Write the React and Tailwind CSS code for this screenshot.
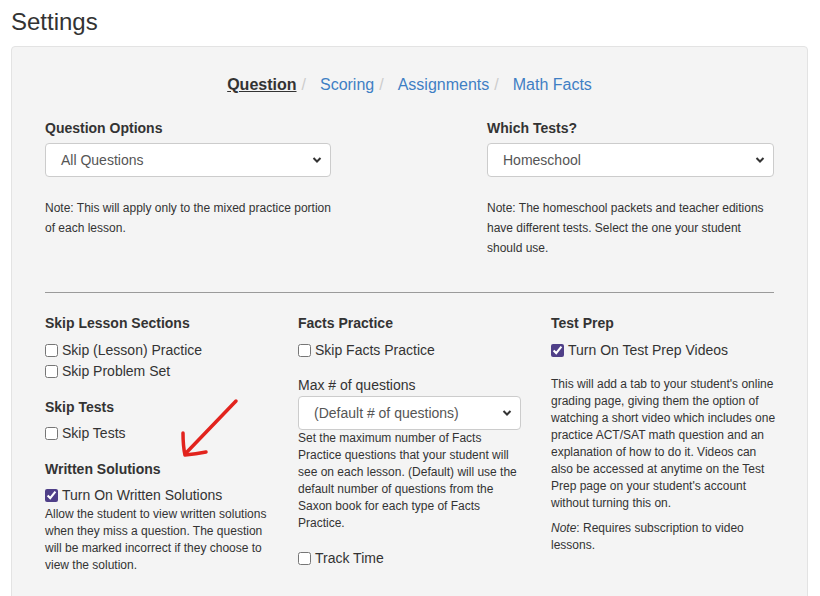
import React from "react";

const font = { fontFamily: '"Liberation Sans", Arial, sans-serif' };

function Chevron() {
  return (
    <svg className="absolute right-[8px] top-1/2 -translate-y-1/2" width="10" height="8" viewBox="0 0 10 8">
      <path d="M1.5 2 L5 5.5 L8.5 2" fill="none" stroke="#333" strokeWidth="2" />
    </svg>
  );
}

function Select({ value, className }) {
  return (
    <div className={"relative h-[34px] bg-white border border-[#cccccc] rounded-[4px] " + className}>
      <div className="absolute left-[15px] top-0 h-full flex items-center text-[14px] text-[#555555]">{value}</div>
      <Chevron />
    </div>
  );
}

function Check({ label, checked }) {
  return (
    <label className="flex items-center h-[20px] text-[14px] leading-[20px] text-[#333333]">
      <input
        type="checkbox"
        defaultChecked={checked}
        className="w-[13px] h-[13px] m-0 mr-[4px] accent-[#4f3f88]"
      />
      <span>{label}</span>
    </label>
  );
}

function H({ children, className = "" }) {
  return <div className={"text-[14px] leading-[20px] font-bold text-[#333333] " + className}>{children}</div>;
}

export default function App() {
  return (
    <div className="relative w-[820px] h-[596px] overflow-hidden bg-white px-[11px]" style={font}>
      <h1 className="pt-[9px] text-[24px] leading-[26px] text-[#333333]">Settings</h1>
      <div className="mt-[11px] w-[797px] h-[600px] border border-[#e3e3e3] rounded-[4px] bg-[#f4f4f4] px-[33px]">
        <div className="pt-[28px] flex justify-center text-[16px] leading-[20px]">
          <span className="font-bold underline text-[#333333]">Question</span>
          <span className="ml-[5px] mr-[14px] text-[#cccccc]">/</span>
          <span className="text-[#3f7fc4]">Scoring</span>
          <span className="ml-[5px] mr-[14px] text-[#cccccc]">/</span>
          <span className="text-[#3f7fc4]">Assignments</span>
          <span className="ml-[5px] mr-[14px] text-[#cccccc]">/</span>
          <span className="text-[#3f7fc4]">Math Facts</span>
        </div>

        <div className="mt-[23px] flex justify-between">
          <div className="w-[286px]">
            <H>Question Options</H>
            <Select value="All Questions" className="mt-[5px]" />
            <p className="mt-[21px] text-[12px] leading-[20px] text-[#333333]">
              Note: This will apply only to the mixed practice portion of each lesson.
            </p>
          </div>
          <div className="w-[287px]">
            <H>Which Tests?</H>
            <Select value="Homeschool" className="mt-[5px]" />
            <p className="mt-[21px] text-[12px] leading-[20px] text-[#333333]">
              Note: The homeschool packets and teacher editions have different tests. Select the one your student should use.
            </p>
          </div>
        </div>

        <div className="mt-[34px] h-px bg-[#9a9a9a]" />

        <div className="mt-[20px] flex">
          <div className="w-[223px] shrink-0">
            <H className="mb-[7px]">Skip Lesson Sections</H>
            <Check label="Skip (Lesson) Practice" />
            <div className="h-[1px]" />
            <Check label="Skip Problem Set" />
            <H className="mt-[16px] mb-[6px]">Skip Tests</H>
            <Check label="Skip Tests" />
            <H className="mt-[16px] mb-[6px]">Written Solutions</H>
            <Check label="Turn On Written Solutions" checked />
            <p className="mt-[1px] text-[12px] leading-[17px] text-[#333333]">
              Allow the student to view written solutions when they miss a question. The question will be marked incorrect if they choose to view the solution.
            </p>
          </div>
          <div className="ml-[30px] w-[223px] shrink-0">
            <H className="mb-[7px]">Facts Practice</H>
            <Check label="Skip Facts Practice" />
            <div className="mt-[15px] text-[14px] leading-[20px] text-[#333333]">Max # of questions</div>
            <Select value="(Default # of questions)" className="mt-[1px] h-[33px]" />
            <p className="text-[12px] leading-[17px] text-[#333333]">
              Set the maximum number of Facts Practice questions that your student will see on each lesson. (Default) will use the default number of questions from the Saxon book for each type of Facts Practice.
            </p>
            <div className="mt-[16px]">
              <Check label="Track Time" />
            </div>
          </div>
          <div className="ml-[30px] w-[228px] shrink-0">
            <H className="mb-[7px]">Test Prep</H>
            <Check label="Turn On Test Prep Videos" checked />
            <p className="mt-[16px] text-[12px] leading-[17px] text-[#333333]">
              This will add a tab to your student's online grading page, giving them the option of watching a short video which includes one practice ACT/SAT math question and an explanation of how to do it. Videos can also be accessed at anytime on the Test Prep page on your student's account without turning this on.
            </p>
            <p className="mt-[8px] w-[223px] text-[12px] leading-[17px] text-[#333333]">
              <em>Note</em>: Requires subscription to video lessons.
            </p>
          </div>
        </div>
      </div>

      <svg className="absolute left-0 top-0 pointer-events-none" width="820" height="596" viewBox="0 0 820 596">
        <path d="M236 401 L186 453" fill="none" stroke="#e2231d" strokeWidth="3.5" strokeLinecap="round" />
        <path d="M183 433 Q183 446 185 455 Q196 454 206 452" fill="none" stroke="#e2231d" strokeWidth="3.5" strokeLinecap="round" strokeLinejoin="round" />
      </svg>
    </div>
  );
}
